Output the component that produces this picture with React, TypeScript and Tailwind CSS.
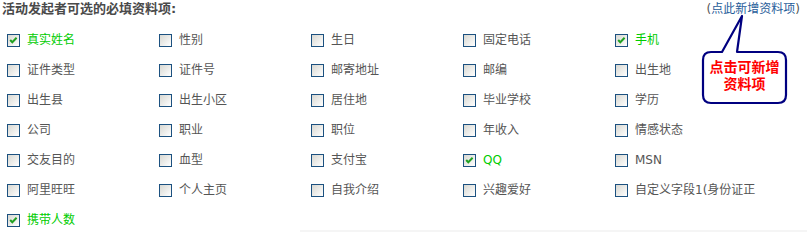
import React from "react";

const items: { label: string; checked?: boolean }[] = [
  { label: "真实姓名", checked: true },
  { label: "性别" },
  { label: "生日" },
  { label: "固定电话" },
  { label: "手机", checked: true },
  { label: "证件类型" },
  { label: "证件号" },
  { label: "邮寄地址" },
  { label: "邮编" },
  { label: "出生地" },
  { label: "出生县" },
  { label: "出生小区" },
  { label: "居住地" },
  { label: "毕业学校" },
  { label: "学历" },
  { label: "公司" },
  { label: "职业" },
  { label: "职位" },
  { label: "年收入" },
  { label: "情感状态" },
  { label: "交友目的" },
  { label: "血型" },
  { label: "支付宝" },
  { label: "QQ", checked: true },
  { label: "MSN" },
  { label: "阿里旺旺" },
  { label: "个人主页" },
  { label: "自我介绍" },
  { label: "兴趣爱好" },
  { label: "自定义字段1(身份证正" },
  { label: "携带人数", checked: true },
];

function Box({ checked }: { checked?: boolean }) {
  return (
    <span className="flex h-[13px] w-[13px] shrink-0 items-center justify-center border border-[#1c5180] bg-linear-to-br from-[#d8d8d2] to-white">
      {checked && (
        <svg width="11" height="11" viewBox="0 0 11 11">
          <path d="M2.2 5 L4.3 7.2 L8.6 2.8" fill="none" stroke="#21a121" strokeWidth="2" />
        </svg>
      )}
    </span>
  );
}

export default function App() {
  return (
    <div
      className="relative h-[232px] w-[807px] overflow-hidden bg-white text-[12px] text-[#555]"
      style={{ fontFamily: '"DejaVu Sans","Noto Sans CJK SC",sans-serif' }}
    >
      <div className="flex h-[25px] items-start justify-between pl-[2px] pr-[7px] pt-[1px] leading-[16px]">
        <span className="text-[13px] font-bold text-[#4a4a4a]">活动发起者可选的必填资料项:</span>
        <span className="text-[#555]">
          (<span className="text-[#1f5c99]">点此新增资料项</span>)
        </span>
      </div>
      <div className="grid auto-rows-[30px] grid-cols-[repeat(5,152px)] pl-[7px]">
        {items.map((it, i) => (
          <div key={i} className="flex items-center gap-[7px] overflow-hidden whitespace-nowrap pr-[4px]">
            <Box checked={it.checked} />
            <span className={it.checked ? "text-[#00cc00]" : "text-[#555]"}>{it.label}</span>
          </div>
        ))}
      </div>
      <div className="-mt-[5px] ml-[300px] h-[3px] bg-[#f5f5f5]" />

      <div className="absolute left-[700px] top-[14px] h-[92px] w-[90px]">
        <svg width="90" height="92" viewBox="0 0 90 92" className="absolute left-0 top-0">
          <path
            d="M11 38 L22 38 L42 2 L37 38 L78 38 Q86 38 86 46 L86 81 Q86 89 78 89 L11 89 Q3 89 3 81 L3 46 Q3 38 11 38 Z"
            fill="white"
            stroke="#000080"
            strokeWidth="2.2"
            strokeLinejoin="round"
          />
        </svg>
        <div className="absolute left-[3px] top-[45px] w-[83px] text-center text-[14px] font-bold leading-[17px] text-[#ff0000]">
          点击可新增
          <br />
          资料项
        </div>
      </div>
    </div>
  );
}
